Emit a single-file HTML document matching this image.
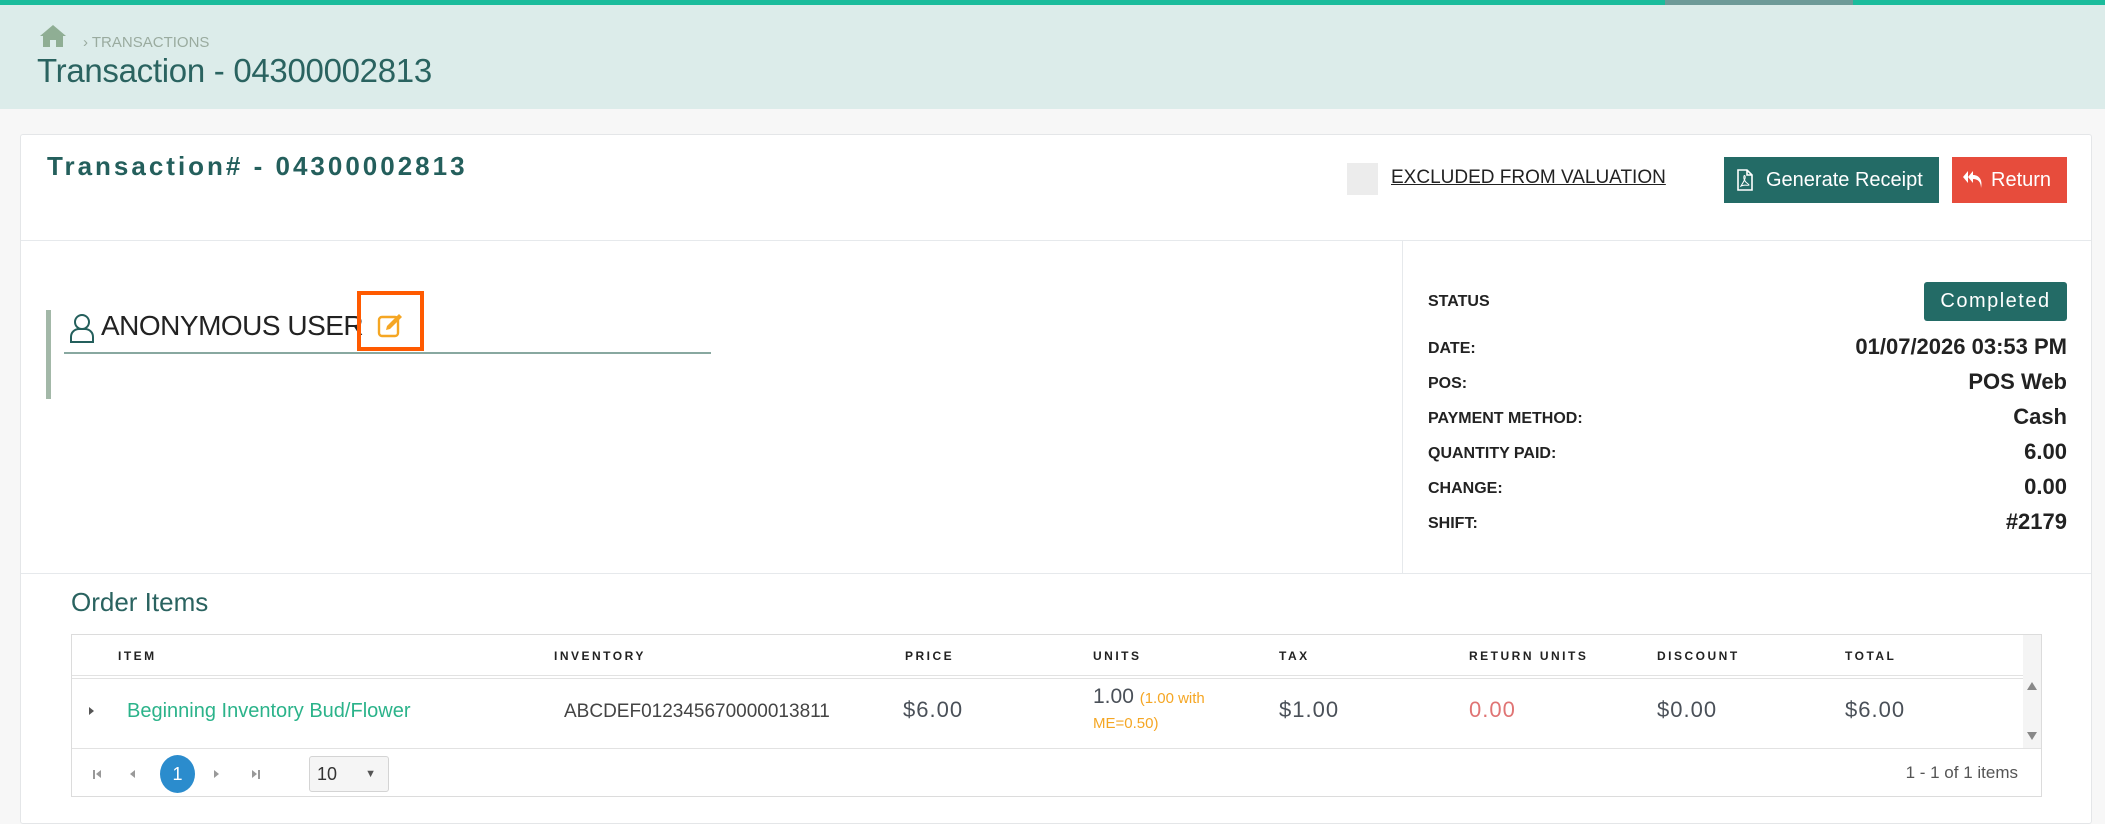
<!DOCTYPE html>
<html><head><meta charset="utf-8"><style>
*{box-sizing:border-box;margin:0;padding:0}
body{width:2105px;height:807px;overflow:hidden;background:#f7f7f7;font-family:"Liberation Sans",sans-serif;position:relative}
.a{position:absolute;white-space:nowrap}
.lbl{position:absolute;left:1428px;font-size:16px;font-weight:bold;color:#222;transform:translateY(-50%)}
.val{position:absolute;right:38px;font-size:22px;font-weight:bold;color:#222;transform:translateY(-50%)}
.th{position:absolute;top:649px;font-size:12px;font-weight:bold;letter-spacing:2.5px;color:#222}
.td{position:absolute;top:697px;font-size:22px;letter-spacing:1px;color:#4a5058}
.bar{position:absolute;width:2px;height:9px;background:#999}
</style></head><body>
<div class="a" style="left:0;top:0;width:2105px;height:5px;background:#1abc9c"></div>
<div class="a" style="left:1665px;top:0;width:188px;height:5px;background:#6e9a98"></div>
<div class="a" style="left:0;top:5px;width:2105px;height:104px;background:#dcecea"></div>
<svg class="a" style="left:39px;top:24px" width="28" height="24" viewBox="0 0 28 24"><path d="M14 1 L1 12 L4 12 L4 23 L11 23 L11 16 L17 16 L17 23 L24 23 L24 12 L27 12 Z" fill="#8fae94"/></svg>
<div class="a" style="left:83px;top:34px;font-size:15px;color:#9aab9f">› TRANSACTIONS</div>
<div class="a" style="left:37px;top:52px;font-size:33px;color:#2a6360;letter-spacing:-.3px">Transaction - 04300002813</div>

<div class="a" style="left:20px;top:134px;width:2072px;height:690px;background:#fff;border:1px solid #e4e6e8;border-radius:3px"></div>
<div class="a" style="left:47px;top:151px;font-size:26px;font-weight:bold;letter-spacing:3px;color:#245f5c">Transaction# - 04300002813</div>
<div class="a" style="left:1347px;top:163px;width:31px;height:32px;background:#ececec"></div>
<div class="a" style="left:1391px;top:167px;font-size:19px;color:#222;text-decoration:underline">EXCLUDED FROM VALUATION</div>
<div class="a" style="left:1724px;top:157px;width:215px;height:46px;background:#236b66;color:#fff;font-size:20px;line-height:46px;padding-left:42px">Generate Receipt</div>
<svg class="a" style="left:1736px;top:169px" width="18" height="22" viewBox="0 0 18 22"><path d="M2 1 H11 L16 6 V21 H2 Z M11 1 V6 H16" fill="none" stroke="#fff" stroke-width="1.6"/><path d="M5 17 C8 12 10 9 9 7 C8 5 7 9 9 12 C10 14 13 15 13 16 C12 17 9 15 5 17Z" fill="none" stroke="#fff" stroke-width="1"/></svg>
<div class="a" style="left:1952px;top:157px;width:115px;height:46px;background:#e74c3c;color:#fff;font-size:20px;line-height:46px;padding-left:39px">Return</div>
<svg class="a" style="left:1962px;top:169px" width="22" height="20" viewBox="0 0 22 20"><path d="M6 2 L1 8 L6 14 Z M11 2 L6 8 L11 14 V10 C16 10 19 13 19 19 C21 11 17 6 11 6 Z" fill="#fff"/></svg>
<div class="a" style="left:21px;top:240px;width:2070px;height:1px;background:#e6e9ec"></div>
<div class="a" style="left:1402px;top:240px;width:1px;height:333px;background:#e6e9ec"></div>
<div class="a" style="left:21px;top:573px;width:2070px;height:1px;background:#e6e9ec"></div>

<div class="a" style="left:46px;top:310px;width:5px;height:89px;background:#a3b8a8"></div>
<svg class="a" style="left:69px;top:313px" width="26" height="30" viewBox="0 0 26 30"><circle cx="13" cy="9" r="7" fill="none" stroke="#245f5c" stroke-width="2"/><path d="M2 29 V24 C2 19 6 16 10 16 H16 C20 16 24 19 24 24 V29 Z" fill="none" stroke="#245f5c" stroke-width="2"/></svg>
<div class="a" style="left:101px;top:310px;font-size:28px;color:#222;letter-spacing:-.5px">ANONYMOUS USER</div>
<div class="a" style="left:64px;top:352px;width:647px;height:2px;background:#88a8a0"></div>
<div class="a" style="left:357px;top:291px;width:67px;height:60px;border:4px solid #ff5a00"></div>
<svg class="a" style="left:377px;top:312px" width="30" height="26" viewBox="0 0 30 26"><rect x="2" y="5" width="19" height="19" rx="3" fill="none" stroke="#f5a623" stroke-width="2.4"/><path d="M9 18 L10 14 L22 2 L25 5 L13 17 Z" fill="#f5a623"/></svg>

<div class="lbl" style="top:302px">STATUS</div>
<div class="a" style="left:1924px;top:282px;width:143px;height:39px;background:#236b66;border-radius:3px;color:#fff;font-size:20px;letter-spacing:1.5px;text-align:center;line-height:39px">Completed</div>
<div class="lbl" style="top:349px">DATE:</div><div class="val" style="top:347px">01/07/2026 03:53 PM</div>
<div class="lbl" style="top:384px">POS:</div><div class="val" style="top:382px">POS Web</div>
<div class="lbl" style="top:419px">PAYMENT METHOD:</div><div class="val" style="top:417px">Cash</div>
<div class="lbl" style="top:454px">QUANTITY PAID:</div><div class="val" style="top:452px">6.00</div>
<div class="lbl" style="top:489px">CHANGE:</div><div class="val" style="top:487px">0.00</div>
<div class="lbl" style="top:524px">SHIFT:</div><div class="val" style="top:522px">#2179</div>

<div class="a" style="left:71px;top:587px;font-size:26px;color:#2a6360">Order Items</div>
<div class="a" style="left:71px;top:634px;width:1971px;height:163px;border:1px solid #dcdcdc;background:#fff"></div>
<div class="a" style="left:2023px;top:635px;width:18px;height:113px;background:#f4f4f4"></div>
<div class="a" style="left:72px;top:675px;width:1951px;height:1px;background:#e2e2e2"></div>
<div class="a" style="left:72px;top:678px;width:1951px;height:1px;background:#e2e2e2"></div>
<div class="a" style="left:72px;top:748px;width:1969px;height:1px;background:#e2e2e2"></div>
<div class="th" style="left:118px">ITEM</div>
<div class="th" style="left:554px">INVENTORY</div>
<div class="th" style="left:905px">PRICE</div>
<div class="th" style="left:1093px">UNITS</div>
<div class="th" style="left:1279px">TAX</div>
<div class="th" style="left:1469px">RETURN UNITS</div>
<div class="th" style="left:1657px">DISCOUNT</div>
<div class="th" style="left:1845px">TOTAL</div>
<div class="a" style="left:89px;top:707px;width:0;height:0;border-left:5px solid #555;border-top:4px solid transparent;border-bottom:4px solid transparent"></div>
<div class="a" style="left:127px;top:700px;font-size:20px;color:#2bb38a">Beginning Inventory Bud/Flower</div>
<div class="a" style="left:564px;top:701px;font-size:19px;color:#444">ABCDEF012345670000013811</div>
<div class="td" style="left:903px">$6.00</div>
<div class="a" style="left:1093px;top:685px;font-size:21px;color:#4a5058">1.00 <span style="font-size:15px;color:#f5a623">(1.00 with</span></div>
<div class="a" style="left:1093px;top:715px;font-size:15px;color:#f5a623">ME=0.50)</div>
<div class="td" style="left:1279px">$1.00</div>
<div class="td" style="left:1469px;color:#e07474">0.00</div>
<div class="td" style="left:1657px">$0.00</div>
<div class="td" style="left:1845px">$6.00</div>
<div class="a" style="left:2027px;top:682px;border-bottom:8px solid #888;border-left:5px solid transparent;border-right:5px solid transparent"></div>
<div class="a" style="left:2027px;top:732px;border-top:8px solid #888;border-left:5px solid transparent;border-right:5px solid transparent"></div>
<div class="bar" style="left:93px;top:770px"></div>
<div class="a" style="left:96px;top:770px;border-right:5px solid #999;border-top:4.5px solid transparent;border-bottom:4.5px solid transparent"></div>
<div class="a" style="left:130px;top:770px;border-right:5px solid #999;border-top:4.5px solid transparent;border-bottom:4.5px solid transparent"></div>
<div class="a" style="left:160px;top:755px;width:35px;height:38px;border-radius:50%;background:#2b8ccd;color:#fff;font-size:18px;text-align:center;line-height:38px">1</div>
<div class="a" style="left:214px;top:770px;border-left:5px solid #999;border-top:4.5px solid transparent;border-bottom:4.5px solid transparent"></div>
<div class="a" style="left:252px;top:770px;border-left:5px solid #999;border-top:4.5px solid transparent;border-bottom:4.5px solid transparent"></div>
<div class="bar" style="left:258px;top:770px"></div>
<div class="a" style="left:309px;top:756px;width:80px;height:36px;border:1px solid #d4d4d4;border-radius:3px;background:#f5f5f5;font-size:18px;color:#333;line-height:34px;padding-left:7px">10<span style="position:absolute;right:12px;font-size:11px;color:#555">▼</span></div>
<div class="a" style="right:87px;top:763px;font-size:17px;color:#555">1 - 1 of 1 items</div>
</body></html>
